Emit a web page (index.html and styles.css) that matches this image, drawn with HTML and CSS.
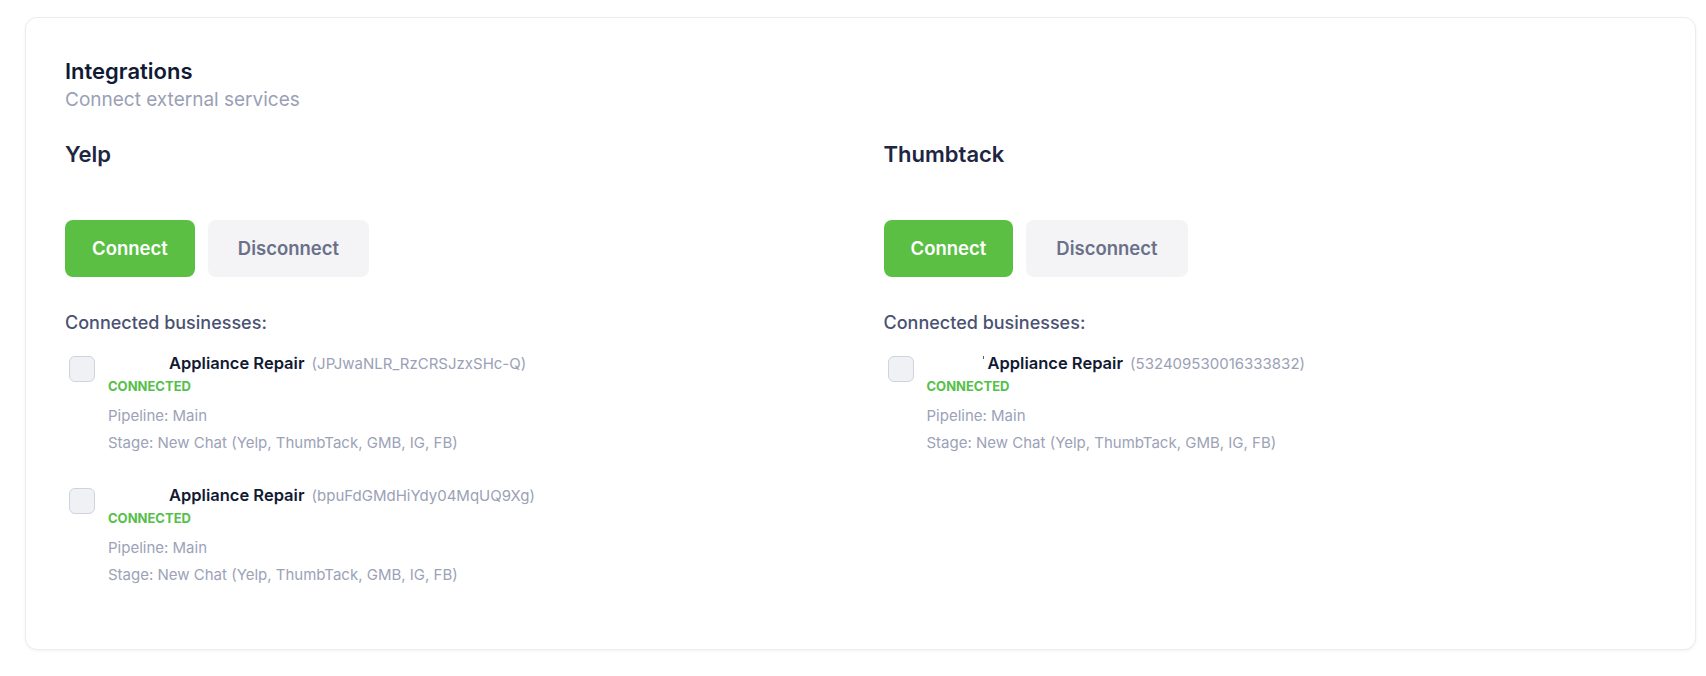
FILE: index.html
```html
<!DOCTYPE html>
<html lang="en">
<head>
    <meta charset="UTF-8">
    <meta name="viewport" content="width=device-width, initial-scale=1.0">
    <title>Integrations</title>
    <link rel="stylesheet" href="styles.css">
</head>
<body>
    <div class="card">
        <h1 class="title">Integrations</h1>
        <p class="subtitle">Connect external services</p>

        <div class="services">
            <!-- Yelp -->
            <div class="service">
                <h2 class="serviceName">Yelp</h2>
                <div class="actions">
                    <button type="button" class="btn btnConnect">Connect</button>
                    <button type="button" class="btn btnDisconnect">Disconnect</button>
                </div>
                <div class="listLabel">Connected businesses:</div>
                <ul class="businessList">
                    <li class="business">
                        <span class="checkbox"></span>
                        <div class="businessInfo">
                            <div class="businessName"><span class="hiddenName"></span>Appliance Repair <span class="businessId">(JPJwaNLR_RzCRSJzxSHc-Q)</span></div>
                            <div class="status">CONNECTED</div>
                            <div class="meta">Pipeline: Main</div>
                            <div class="meta">Stage: New Chat (Yelp, ThumbTack, GMB, IG, FB)</div>
                        </div>
                    </li>
                    <li class="business">
                        <span class="checkbox"></span>
                        <div class="businessInfo">
                            <div class="businessName"><span class="hiddenName"></span>Appliance Repair <span class="businessId">(bpuFdGMdHiYdy04MqUQ9Xg)</span></div>
                            <div class="status">CONNECTED</div>
                            <div class="meta">Pipeline: Main</div>
                            <div class="meta">Stage: New Chat (Yelp, ThumbTack, GMB, IG, FB)</div>
                        </div>
                    </li>
                </ul>
            </div>

            <!-- Thumbtack -->
            <div class="service">
                <h2 class="serviceName">Thumbtack</h2>
                <div class="actions">
                    <button type="button" class="btn btnConnect">Connect</button>
                    <button type="button" class="btn btnDisconnect">Disconnect</button>
                </div>
                <div class="listLabel">Connected businesses:</div>
                <ul class="businessList">
                    <li class="business">
                        <span class="checkbox"></span>
                        <div class="businessInfo">
                            <div class="businessName"><span class="hiddenName tick"></span>Appliance Repair <span class="businessId">(532409530016333832)</span></div>
                            <div class="status">CONNECTED</div>
                            <div class="meta">Pipeline: Main</div>
                            <div class="meta">Stage: New Chat (Yelp, ThumbTack, GMB, IG, FB)</div>
                        </div>
                    </li>
                </ul>
            </div>
        </div>
    </div>
</body>
</html>
```

FILE: styles.css
```css
/* Integrations page */
body {
    font-family: Inter, "Noto Sans", Arial, sans-serif;
    margin: 0;
    padding: 17px 10px 27px 25px;
    background-color: #fff;
}
.card {
    padding: 39px 39px 61px;
    background-color: #fff;
    border: 1px solid #ececf1;
    border-radius: 12px;
    box-shadow: 0 1px 3px rgba(16, 24, 40, 0.06);
}
.title {
    margin: 0;
    font-size: 22px;
    line-height: 28px;
    font-weight: 600;
    color: #111a35;
}
.subtitle {
    margin: 2px 0 0;
    font-size: 19px;
    line-height: 26px;
    color: #9aa0b6;
}
.services {
    display: grid;
    grid-template-columns: 1fr 1fr;
    column-gap: 46px;
    margin-top: 27px;
}
.serviceName {
    margin: 0 0 52px;
    font-size: 22px;
    line-height: 28px;
    font-weight: 600;
    color: #1e2642;
}
.actions {
    display: flex;
    gap: 13px;
}
.btn {
    padding: 16px 27px;
    border: none;
    border-radius: 8px;
    font-family: inherit;
    font-size: 18.5px;
    line-height: 25px;
    font-weight: 600;
    cursor: pointer;
}
.btnConnect {
    background-color: #5bbf44;
    color: #fff;
}
.btnDisconnect {
    padding: 16px 30px;
    background-color: #f4f4f7;
    color: #6b7089;
}
.listLabel {
    margin-top: 34px;
    font-size: 18px;
    line-height: 24px;
    font-weight: 500;
    color: #4a5272;
}
.businessList {
    list-style: none;
    margin: 17px 0 0;
    padding: 0;
}
.business {
    display: flex;
    gap: 13px;
    margin-bottom: 28px;
}
.business:last-child {
    margin-bottom: 0;
}
.checkbox {
    flex: none;
    width: 24px;
    height: 24px;
    margin: 4px 0 0 4px;
    background-color: #f0f1f5;
    border: 1px solid #cfd3e0;
    border-radius: 6px;
}
.businessName {
    font-size: 16.5px;
    line-height: 22px;
    font-weight: 600;
    color: #121a33;
}
.hiddenName {
    display: inline-block;
    position: relative;
    width: 61px;
    height: 1px;
}
.tick::after {
    content: "";
    position: absolute;
    right: 4px;
    top: -12px;
    width: 1px;
    height: 3px;
    background-color: #5a6076;
}
.businessId {
    margin-left: 3px;
    font-size: 15px;
    font-weight: 400;
    color: #9ba1b6;
}
.status {
    margin-top: 2px;
    font-size: 13px;
    line-height: 18px;
    font-weight: 700;
    color: #55c049;
}
.status + .meta {
    margin-top: 7px;
}
.meta {
    font-size: 15px;
    line-height: 27px;
    color: #9ca2b7;
}
```
